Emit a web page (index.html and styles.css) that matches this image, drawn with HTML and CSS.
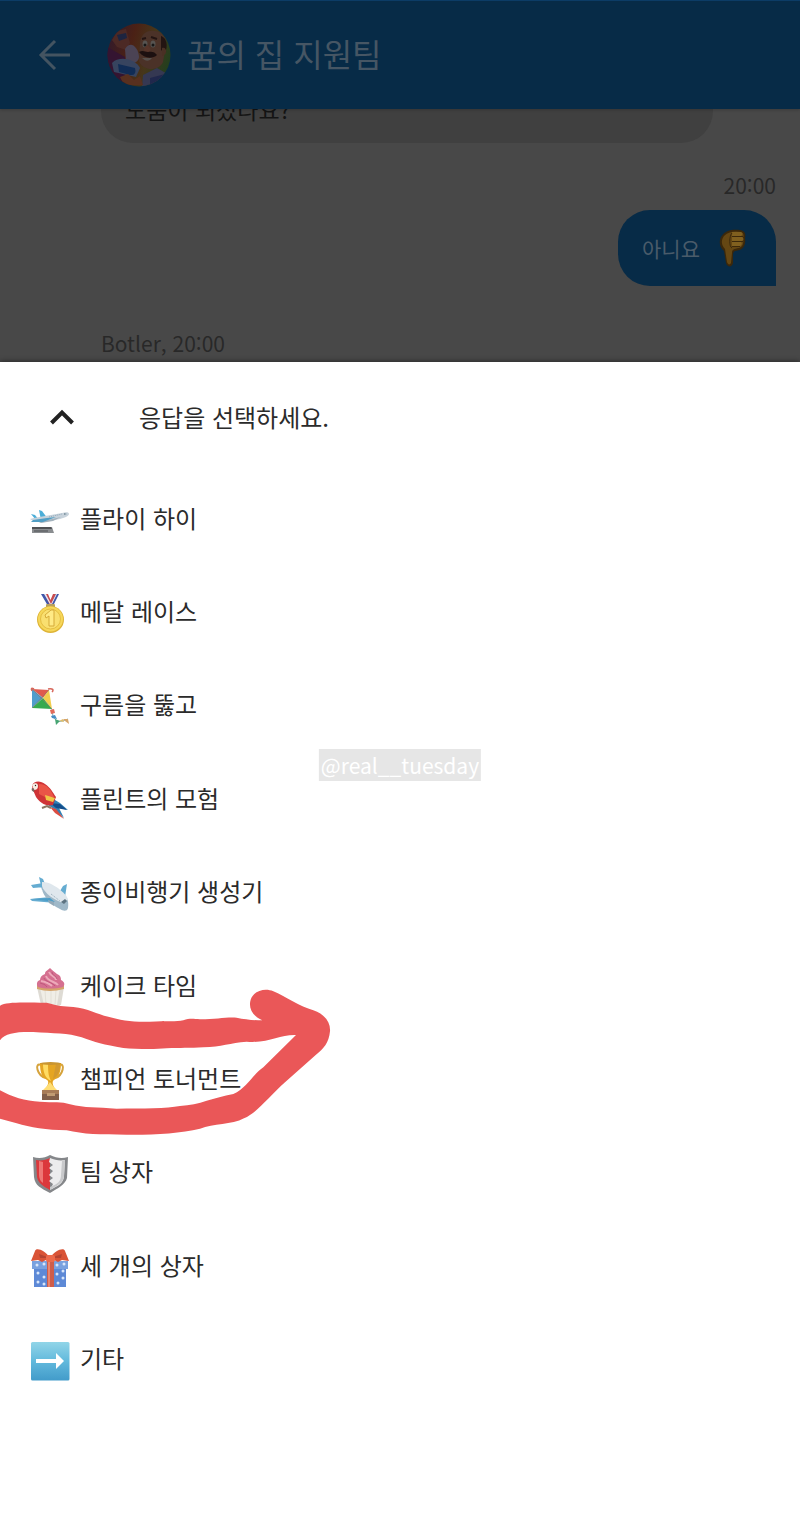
FILE: index.html
```html
<!DOCTYPE html>
<html lang="ko">
<head>
<meta charset="utf-8">
<meta name="viewport" content="width=device-width, initial-scale=1">
<title>꿈의 집 지원팀</title>
<link rel="stylesheet" href="styles.css">
</head>
<body>
<div class="app">
  <header class="topbar">
    <button class="icon-button" type="button" aria-label="뒤로">
      <svg class="back-icon" viewBox="0 0 32 32"><path d="M17 2 3 16l14 14M3 16h29"/></svg>
    </button>
    <svg class="avatar" viewBox="0 0 64 64" aria-hidden="true">
      <defs>
        <clipPath id="face-clip"><circle cx="32" cy="32" r="31.5"/></clipPath>
        <linearGradient id="face-bg" x1="0" y1=".3" x2="1" y2=".6"><stop stop-color="#321a2b"/><stop offset=".35" stop-color="#4b2115"/><stop offset=".65" stop-color="#46361a"/><stop offset="1" stop-color="#213f1e"/></linearGradient>
      </defs>
      <g clip-path="url(#face-clip)">
        <path fill="url(#face-bg)" d="M0 0h64v64H0z"/>
        <path fill="#341431" d="M0 24 18 34 18 64H0z"/>
        <path fill="#4b3228" d="M33 20C34 11 40 7 47 8c8 0 12 6 12 13l-3 18c-4 10-21 9-24-1z"/>
        <path fill="#231412" d="M54 13c6 2 7 10 4 17l-4-3z"/>
        <path fill="#4a3024" d="M55 25c5-2 6 7 0 8z"/>
        <ellipse cx="38" cy="21" rx="2.500" ry="3.500" fill="#565350"/><ellipse cx="46" cy="21" rx="2.500" ry="3.500" fill="#565350"/>
        <circle cx="38" cy="22" r="1.500" fill="#171717"/><circle cx="46" cy="22" r="1.500" fill="#171717"/>
        <path fill="none" stroke="#231412" stroke-width="2" d="m35 16 4-1m5-1 6 2"/>
        <path fill="#563429" d="M40 22c4 2 5 7 0 8-4-1-4-4 0-8z"/>
        <path fill="#1c1010" d="M32 29c4-2 6 0 9 0 4-1 7 0 9 3-4 4-13 4-18-3z"/>
        <path fill="#57504c" d="M35 35h10c-3 4-7 3-10 0z"/>
        <path fill="#353852" d="m36 52 14-7 14 8v11H35z"/>
        <path fill="#20274c" d="m43 55 15-4v13H43z"/>
        <path fill="#4c2925" d="M5 17 10 8l9-2 4 14-4 7-9-3z"/>
        <path fill="#1d2440" d="m10 12 9-2 1 5-8 3z"/>
        <path fill="#4b4354" d="M18 26c6-10 14 0 14 8 0 6-9 8-13 5z"/>
        <path fill="#37445f" d="M5 40c7-8 24-4 28 5l-4 9-22-5z"/>
        <path fill="#102c55" d="m11 41 17 4q2 8-5 7l-11-3z"/>
        <path fill="#58301f" d="m13 54 8-3 6 6 6-4 3 9H17z"/>
      </g>
    </svg>
    <h1 class="topbar-title">꿈의 집 지원팀</h1>
  </header>

  <main class="chat">
    <p class="message message-bot">도움이 되셨나요?</p>
    <p class="meta meta-user">20:00</p>
    <p class="message message-user">아니요
      <svg class="thumb" viewBox="0 0 38 38" role="img" aria-label="싫어요">
        <path fill="#3b280b" d="M7 8C11 1 19 0 26 1c5 1 6 4 5 8 1 6-1 10-5 12-4 1-6 0-7 4v9c-1 5-6 4-7 0l-2-12C5 18 5 12 7 8z"/>
        <path fill="#654713" d="M10 7c5-5 12-5 17-4 3 1 3 4 2 6 1 5 0 9-4 10-5 1-7 1-7 5l-1 10c-1 2-3 2-4-1l-2-13c-4-4-4-9-1-13z"/>
        <path fill="#80601f" d="M18 3h9q3 2 0 4h-9zm0 5h10q3 2 0 4H18zm0 5h9q2 2-1 4h-8z"/>
        <path fill="none" stroke="#3b280b" d="M18 4c-3 3-3 14 0 15M18 7.500h11m-11 5h11m-11 5h8"/>
      </svg>
    </p>
    <p class="meta">Botler, 20:00</p>
  </main>

  <section class="sheet" aria-labelledby="sheet-title">
    <div class="sheet-header">
      <button class="icon-button" type="button" aria-label="펼치기">
        <svg class="chevron-icon" viewBox="0 0 26 18"><path d="m2.500 15 10.500-10.500 10.500 10.500"/></svg>
      </button>
      <h2 class="sheet-title" id="sheet-title">응답을 선택하세요.</h2>
    </div>
    <ul class="options">
      <li class="option-row"><button class="option" type="button">
        <svg class="option-icon" viewBox="0 0 40 40" aria-hidden="true">
          <path fill="#8a8d90" d="M2 26h20l2 6H2z"/><path fill="#505255" d="M2 26h19l1 2H2z"/><path fill="#6b6e71" d="M4 29h14v2H4z"/>
          <path fill="#4caed8" d="m9 9 3 1 6 8-7 1zM1 13l4 1 4 5H6z"/>
          <path fill="#c7d2db" d="m4 17 28-5c4-1 7-1 7 1s-5 4-9 5l-16 3c-6 1-11-1-14-3z"/>
          <path fill="#a3b2bd" d="m9 21 22-5-8 4-12 2z"/><path fill="#519ec4" d="m17 17 9-1-13 5H1l2-2z"/>
          <path fill="none" stroke="#93aaba" stroke-dasharray="1 1" d="m19 16 13-3"/><path fill="#7b909d" d="m34 12 3 1-3 1z"/>
        </svg>플라이 하이</button></li>
      <li class="option-row"><button class="option" type="button">
        <svg class="option-icon" viewBox="0 0 40 40" aria-hidden="true">
          <path fill="#4058aa" d="M11 0h4l7 12h-4zm14 0h4l-6 12h-4z"/><path fill="#c84c4f" d="M15 0h3l5 12h-3zm8 0h3l-5 12h-3z"/><path fill="#e8e8f1" d="m14 0 7 12h1L16 0zm12 0-6 12h1l6-12z"/>
          <rect x="16" y="10" width="9" height="4" rx="1" fill="#b7a05d"/>
          <circle cx="20.500" cy="25.500" r="13.500" fill="#deb437"/><circle cx="20.500" cy="25" r="12.500" fill="#f6d75a"/><circle cx="20.500" cy="25" r="10" fill="#f9df70" stroke="#e5be43"/>
          <path fill="#ffea86" stroke="#d5aa39" d="m15 21 6-5h3v16h-5V22l-3 2z"/>
        </svg>메달 레이스</button></li>
      <li class="option-row"><button class="option" type="button">
        <svg class="option-icon" viewBox="0 0 40 40" aria-hidden="true">
          <path fill="#df594d" d="M2 2 19 3 13 11z"/><path fill="#4f9dcc" d="m2 2 11 9L2 21z"/><path fill="#f2ce4e" d="m19 3 3 19-9-11z"/><path fill="#36aa4e" d="m2 21 11-10 9 11z"/>
          <path fill="none" stroke="#8b7565" stroke-width=".6" d="m2 21 17-18M2 2l20 20"/><path fill="none" stroke="#d7665a" stroke-width="1.500" d="M2 4q-2-4 2-2m14 0c5-1 6 1 4 3"/>
          <path fill="none" stroke="#7aaabc" d="m22 22 1 8c5 7 9 4 15 2"/><path fill="#e16b5b" d="m20 23 4-1 1 4-4 1z"/><path fill="#458ec5" d="m21 29 4-1 2 4-5-1z"/><path fill="#47a573" d="m25 32 5 2-4 4z"/><path fill="#dfbd68" d="m29 34 4-2 1 3z"/><path fill="#d6a66a" d="m33 32 5 0 1 5-4-3z"/>
        </svg>구름을 뚫고</button></li>
      <li class="option-row"><button class="option" type="button">
        <svg class="option-icon" viewBox="0 0 40 40" aria-hidden="true">
          <path fill="#3182b6" d="m20 16 10 6 8 7-9-2 5 10-10-9-9-6z"/><path fill="#154e8b" d="m20 22 10 1 7 6-11-2zm2 6 5 2 5 6z"/><path fill="#db4e42" d="m20 26 6 2 8 10-9-6z"/>
          <path fill="#cf3437" d="M2 5c2-6 9-5 13-2 6 4 8 9 11 13l-3 8c-7 2-14-3-17-8L3 9z"/><path fill="#ea5547" d="M9 3c8 0 12 6 15 13l-7 1-8-4z"/>
          <path fill="#f1c645" d="m15 14 10 3-2 4-7-2z"/><path fill="#f7efe5" d="M2 4c3-3 6-2 6 1s-2 4-4 4z"/><path fill="#77655f" d="M2 7c2 0 3 2 2 4-2-1-3-2-2-4z"/><circle cx="5.500" cy="4.500" r=".7" fill="#222"/>
          <path fill="none" stroke="#8b7562" stroke-width="2" d="m12 27 5-2 4 2"/>
        </svg>플린트의 모험</button></li>
      <li class="option-row"><button class="option" type="button">
        <svg class="option-icon" viewBox="0 0 40 40" aria-hidden="true">
          <path fill="#65acd1" d="m9 3 4 2 4 10-5 1zM1 11l12-2 2 4-12 1zM0 25l20-2 6 6-24-2zm30-8 3-5 4-2-2 13-5-2z"/>
          <path fill="#9fb8c8" d="M12 9c6-1 13 4 20 9 5 4 7 9 6 16-1 4-5 3-8 1-9-4-17-13-18-20z"/>
          <path fill="#dfe7ed" d="M12 8c9-1 24 11 26 17l-4 4c-9-2-20-10-22-17z"/><path fill="#4c9dc7" d="m2 25 18-1 5 4z"/>
          <path fill="#5c7280" d="m31 28 4-3 2 2-3 3z"/><path fill="none" stroke="#93aab7" stroke-dasharray="1 1" d="m21 20 9 7"/><path fill="#93a9b8" d="m18 26 6 2v4l-5-3z"/>
        </svg>종이비행기 생성기</button></li>
      <li class="option-row"><button class="option" type="button">
        <svg class="option-icon" viewBox="0 0 40 40" aria-hidden="true">
          <path fill="#dedbd4" d="m7 19 27 0-3 18q-10 4-20 0z"/><path fill="#f0eee7" d="m10 20 20-1-3 18H14z"/><path fill="none" stroke="#e3e0d6" d="m15 22 1 15m5-15v15m5-15-1 15"/>
          <path fill="#d5a46c" d="M7 17h27v4q-14 4-27 0z"/><path fill="#d57090" d="M20 0c3 3 5 4 7 6 3 1 4 3 4 6 4 2 4 5 2 7-8 2-18 2-25 0-2-3-1-6 2-7 0-3 2-5 5-6 0-3 2-3 5-6z"/>
          <path fill="none" stroke="#edaaba" stroke-width="2" d="M19 4c2 5 7 4 7 8M16 8c2 6 9 5 12 9M11 13c5 1 8 2 11 5"/><path fill="none" stroke="#bf587c" d="M22 4c0 4 4 3 5 7M14 10c1 4 8 4 11 8M10 15c3 1 5 1 7 4"/>
        </svg>케이크 타임</button></li>
      <li class="option-row"><button class="option" type="button">
        <svg class="option-icon" viewBox="0 0 40 40" aria-hidden="true">
          <path fill="none" stroke="#d6a33c" stroke-width="2" d="M11 4C4 1 7 15 16 17M29 4c7-3 4 11-4 13"/>
          <path fill="#e5a522" d="M10 2h21c0 10-3 15-7 17-2 1-2 5 2 10H14c5-5 5-9 3-10-5-3-7-7-7-17z"/><path fill="#ffdb62" d="M13 3h5c0 10 1 13 3 17-6-3-8-9-8-17z"/><path fill="#d29930" d="M26 3h4c0 7-2 12-7 15z"/>
          <ellipse cx="20.500" cy="2.500" rx="10.500" ry="1.500" fill="#c99531"/><path fill="#ffde74" d="m17 25 3-4 3 4 4 4H13z"/>
          <path fill="#a87c57" d="M12 29h17v10H12z"/><path fill="#825f49" d="M12 33h17v6H12z"/><path fill="#c19b72" d="M17 32h8v3h-8z"/>
        </svg>챔피언 토너먼트</button>
        <svg class="marker" viewBox="0 75 1020 465" aria-hidden="true">
          <path d="M0 140C20 128 60 130 140 131 175 141 190 142 220 144 265 148 290 166 325 173 360 183 400 190 450 188 500 186 530 189 550 184 570 177 580 180 600 181 650 181 675 174 710 176 735 181 760 184 787 184 755 170 745 145 752 122 761 95 795 86 820 97 855 112 900 143 940 154 975 166 992 190 990 217 987 252 970 270 948 287L855 370C810 410 770 463 732 478 695 498 640 493 600 509 540 523 460 528 380 527 300 527 250 526 200 514 140 514 90 505 50 493L0 479V394C35 413 75 427 120 428 160 432 185 426 210 436 255 447 290 445 350 449 430 448 500 449 540 441 600 438 640 415 700 405 740 388 755 350 790 325L888 228C840 226 805 254 740 248 690 252 665 263 610 265 570 268 540 266 500 268 460 272 405 270 370 267 310 257 285 250 245 235 205 222 160 223 100 219 50 218 15 222 0 244Z"/>
        </svg></li>
      <li class="option-row"><button class="option" type="button">
        <svg class="option-icon" viewBox="0 0 40 40" aria-hidden="true">
          <path fill="#85878a" d="M3 3c6 2 12 1 17-2 6 3 12 4 18 2l-1 21c-2 7-9 10-17 15C11 34 5 32 4 23z"/>
          <path fill="#db383c" d="M6 6c5 1 10 0 14-2v32C13 32 8 29 7 23z"/><path fill="#ececed" d="m20 4-1 4 4 3-4 3 4 3-4 4 4 3-4 3 4 3-3 6c8-4 14-7 14-14l1-16c-5 1-10 0-15-2z"/>
          <path fill="#ee7775" d="m9 7 4 1v21q-4-3-4-8z"/><path fill="#c8c9cb" d="m32 7 3-1-1 16c-1 7-6 9-14 14v-3c8-3 11-6 11-12z"/>
        </svg>팀 상자</button></li>
      <li class="option-row"><button class="option" type="button">
        <svg class="option-icon" viewBox="0 0 40 40" aria-hidden="true">
          <path fill="#5d89d6" d="M4 17h32v22H4z"/><path fill="#79a1df" d="M2 13h36v8H2z"/>
          <g fill="#d7e6fa"><circle cx="7" cy="17" r="1.500"/><circle cx="14" cy="16" r="1.500"/><circle cx="27" cy="17" r="1.500"/><circle cx="34" cy="16" r="1.500"/><circle cx="8" cy="25" r="1.500"/><circle cx="14" cy="29" r="1.500"/><circle cx="8" cy="34" r="1.500"/><circle cx="14" cy="36" r="1.500"/><circle cx="27" cy="26" r="1.500"/><circle cx="33" cy="30" r="1.500"/><circle cx="28" cy="35" r="1.500"/><circle cx="33" cy="23" r="1.500"/></g>
          <path fill="#cf5d4a" d="M17 12h7v27h-7z"/><path fill="#e9856e" d="M18 13h2v26h-2z"/>
          <path fill="#d95336" d="M20 10C15 2 6-1 5 3L1 13l7-1 4 2zm0 0c5-8 14-11 15-7l4 10-7-1-4 2z"/><path fill="#b54331" d="M20 10 9 6l1 4zm0 0 12-4-1 4z"/><rect x="16" y="7" width="9" height="7" rx="2" fill="#ec694a"/>
        </svg>세 개의 상자</button></li>
      <li class="option-row"><button class="option" type="button">
        <svg class="option-icon" viewBox="0 0 40 40" aria-hidden="true">
          <defs><linearGradient id="arrow-bg" x1="0" y1="0" x2="0" y2="1"><stop stop-color="#91d5e8"/><stop offset=".5" stop-color="#62b9dc"/><stop offset="1" stop-color="#429bca"/></linearGradient></defs>
          <rect x="1" y="1" width="38.500" height="38.500" rx="1.500" fill="url(#arrow-bg)"/><path fill="#fff" d="M6 18h20v-6l8 8-8 8v-6H6z"/>
        </svg>기타</button></li>
    </ul>
  </section>
  <p class="watermark">@real__tuesday</p>
</div>
</body>
</html>
```
FILE: styles.css
```css
* {
  box-sizing: border-box;
}

body {
  margin: 0;
  background: #fff;
  color: #2b2b2b;
  font-family: "Noto Sans CJK KR", sans-serif;
  font-size: 24px;
  line-height: 32px;
}

h1,
h2,
p,
ul {
  margin: 0;
  padding: 0;
}

button {
  padding: 0;
  border: 0;
  background: none;
  color: inherit;
  font: inherit;
  cursor: pointer;
}

.app {
  position: relative;
  display: flex;
  flex-direction: column;
  min-height: 100vh;
}

.topbar {
  position: relative;
  display: flex;
  align-items: center;
  height: 109px;
  padding: 0 38px;
  border-top: 1px solid #0c3c66;
  background: #072b47;
  box-shadow: 0 1px 3px rgba(0, 0, 0, 0.2);
}

.icon-button {
  display: flex;
}

.back-icon {
  width: 32px;
  height: 32px;
  fill: none;
  stroke: #445461;
  stroke-width: 3;
}

.avatar {
  width: 64px;
  height: 64px;
  margin: 0 16px 0 37px;
}

.topbar-title {
  padding-bottom: 4px;
  color: #465664;
  font-size: 32px;
  font-weight: 400;
  line-height: 40px;
}

.chat {
  display: flex;
  flex-direction: column;
  justify-content: flex-end;
  height: 253px;
  padding: 0 24px 7px 101px;
  overflow: hidden;
  background: #484848;
}

.message,
.meta {
  flex: none;
}

.message-bot {
  max-width: 612px;
  margin-bottom: 30px;
  padding: 18px 24px;
  border-radius: 32px;
  background: #404040;
  color: #141414;
  font-size: 23px;
}

.meta {
  color: #282828;
  font-size: 21px;
  font-weight: 400;
  line-height: 24px;
}

.meta-user {
  align-self: flex-end;
  margin-bottom: 13px;
}

.message-user {
  display: flex;
  align-items: center;
  align-self: flex-end;
  gap: 14px;
  height: 76px;
  margin-bottom: 45px;
  padding: 0 24px;
  border-radius: 32px 32px 0 32px;
  background: #072b47;
  color: #4a5b6a;
  font-size: 21px;
}

.thumb {
  width: 38px;
  height: 38px;
}

.sheet {
  position: relative;
  flex: 1;
  background: #fff;
  box-shadow: 0 -1px 5px rgba(0, 0, 0, 0.4);
}

.sheet-header {
  display: flex;
  align-items: center;
  gap: 64px;
  height: 110px;
  padding: 0 49px;
}

.chevron-icon {
  width: 26px;
  height: 18px;
  fill: none;
  stroke: #222;
  stroke-width: 4;
}

.sheet-title {
  font-size: 24px;
  font-weight: 400;
}

.options {
  display: grid;
  grid-auto-rows: 1fr;
  min-height: 934px;
  list-style: none;
}

.option-row {
  position: relative;
  display: flex;
}

.option {
  display: flex;
  flex: 1;
  align-items: center;
  gap: 10px;
  padding: 0 30px 2px;
  text-align: left;
}

.option-icon {
  width: 40px;
  height: 40px;
  margin-top: 6px;
}

.marker {
  position: absolute;
  top: -48px;
  left: 0;
  width: 340px;
  height: 155px;
  fill: #ea5758;
  pointer-events: none;
}

.watermark {
  position: absolute;
  top: 50%;
  left: 50%;
  padding: 0 2px;
  background: #e6e6e6;
  color: #fff;
  font-size: 21px;
  transform: translate(-50%, -50%);
}
```
